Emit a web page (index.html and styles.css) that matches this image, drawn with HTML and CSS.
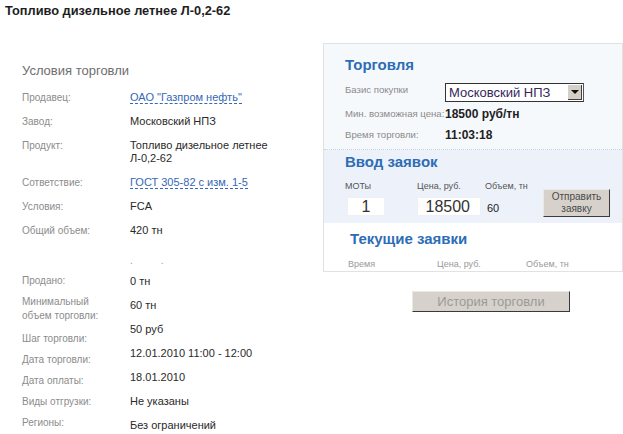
FILE: index.html
```html
<!DOCTYPE html>
<html lang="ru">
<head>
    <meta charset="UTF-8">
    <title>Торги</title>
    <link rel="stylesheet" href="styles.css">
</head>
<body>
    <h1 class="title">Топливо дизельное летнее Л-0,2-62</h1>
    <div class="page">
        <div class="terms">
            <h2>Условия торговли</h2>
            <div class="info">
                <span class="label">Продавец:</span>
                <span class="value"><a href="#" class="link">ОАО "Газпром нефть"</a></span>
                <span class="label">Завод:</span>
                <span class="value">Московский НПЗ</span>
                <span class="label">Продукт:</span>
                <span class="value">Топливо дизельное летнее<br>Л-0,2-62</span>
                <span class="label">Сответствие:</span>
                <span class="value"><a href="#" class="link">ГОСТ 305-82 с изм. 1-5</a></span>
                <span class="label">Условия:</span>
                <span class="value">FCA</span>
                <span class="label">Общий объем:</span>
                <span class="value">420 тн</span>
            </div>
            <div class="dots"><span>.</span><span>.</span></div>
            <div class="split">
                <ul class="labels">
                    <li>Продано:</li>
                    <li>Минимальный<br>объем торговли:</li>
                    <li>Шаг торговли:</li>
                    <li>Дата торговли:</li>
                    <li>Дата оплаты:</li>
                    <li>Виды отгрузки:</li>
                    <li>Регионы:</li>
                </ul>
                <ul class="values">
                    <li>0 тн</li>
                    <li>60 тн</li>
                    <li>50 руб</li>
                    <li>12.01.2010 11:00 - 12:00</li>
                    <li>18.01.2010</li>
                    <li>Не указаны</li>
                    <li>Без ограничений</li>
                </ul>
            </div>
        </div>
        <div class="side">
            <div class="panel">
                <div class="trade">
                    <h3>Торговля</h3>
                    <div class="trade-row first">
                        <span class="tlabel">Базис покупки</span>
                        <div class="select">Московский НПЗ<span class="arrow"></span></div>
                    </div>
                    <div class="trade-row">
                        <span class="tlabel">Мин. возможная цена:</span>
                        <b>18500 руб/тн</b>
                    </div>
                    <div class="trade-row">
                        <span class="tlabel">Время торговли:</span>
                        <b>11:03:18</b>
                    </div>
                </div>
                <div class="order">
                    <h3>Ввод заявок</h3>
                    <div class="fields">
                        <div class="field lots">
                            <span class="flabel">МОТы</span>
                            <div class="box center">1</div>
                        </div>
                        <div class="field price">
                            <span class="flabel">Цена, руб.</span>
                            <div class="box right">18500</div>
                        </div>
                        <div class="field volume">
                            <span class="flabel">Объем, тн</span>
                            <span class="vol">60</span>
                        </div>
                        <button class="send">Отправить<br>заявку</button>
                    </div>
                </div>
                <div class="current">
                    <h3>Текущие заявки</h3>
                    <div class="heads">
                        <span>Время</span>
                        <span>Цена, руб.</span>
                        <span>Объем, тн</span>
                    </div>
                </div>
            </div>
            <button class="history">История торговли</button>
        </div>
    </div>
</body>
</html>
```

FILE: styles.css
```css
*{
    margin: 0;
    padding: 0;
    box-sizing: border-box;
    font-family: "Liberation Sans", Arial, sans-serif;
}
body{
    width: 623px;
    background: #fff;
    color: #2a2a2a;
    padding: 4px 0 0 5px;
}
.title{
    font-size: 12.8px;
    line-height: 14px;
    font-weight: bold;
    color: #1e1e1e;
}
.page{
    display: flex;
    margin-left: -5px;
}

/* left column */
.terms{
    width: 323px;
    padding: 45px 0 0 22px;
}
.terms h2{
    font-size: 13px;
    line-height: 16px;
    font-weight: normal;
    color: #6e6e6e;
    margin-bottom: 12px;
}
.info{
    display: grid;
    grid-template-columns: 108px 1fr;
    row-gap: 11px;
    font-size: 11px;
    line-height: 13px;
}
.label,
.labels li{
    font-size: 10px;
    color: #8c8c8c;
}
.value,
.values li{
    font-size: 11px;
    color: #2a2a2a;
}
.link{
    color: #3567b5;
    text-decoration: none;
    border-bottom: 1px dashed #3567b5;
}
.dots{
    margin: 17px 0 0 108px;
    height: 13px;
    font-size: 10px;
    line-height: 13px;
    color: #999;
}
.dots span{
    margin-right: 28px;
}
.split{
    display: flex;
    margin-top: 7px;
}
.labels,
.values{
    list-style: none;
}
.labels{
    width: 108px;
}
.labels li{
    line-height: 14px;
    margin-bottom: 7px;
}
.labels li:nth-child(2){
    margin-bottom: 9px;
}
.values li{
    line-height: 14px;
    margin-bottom: 10px;
}

/* right column */
.side{
    width: 300px;
    padding-top: 25px;
}
.panel{
    border: 1px solid #e2e2e2;
}
.panel h3{
    font-size: 15px;
    line-height: 17px;
    font-weight: bold;
    color: #2d6db5;
}
.trade{
    background: #f6f9fc;
    padding: 12px 0 4px 21px;
    border-bottom: 1px dotted #c8d2de;
}
.trade h3{
    margin-bottom: 10px;
}
.trade-row{
    display: flex;
    align-items: center;
    height: 21px;
}
.trade-row.first{
    align-items: flex-start;
    height: 20px;
}
.trade-row b{
    font-size: 12px;
    color: #1e1e1e;
}
.tlabel{
    min-width: 100px;
    font-size: 9.6px;
    color: #8a8a8a;
    white-space: nowrap;
}
.trade-row.first .tlabel{
    padding-top: 1px;
}
.select{
    position: relative;
    width: 139px;
    height: 19px;
    background: #fff;
    border: 1px solid #333;
    border-right-color: #555;
    font-size: 13px;
    line-height: 17px;
    color: #35275a;
    padding-left: 3px;
}
.arrow{
    position: absolute;
    right: 1px;
    top: 1px;
    width: 14px;
    height: 15px;
    background: #d4d0c8;
    border-right: 1px solid #404040;
    border-bottom: 1px solid #404040;
}
.arrow::after{
    content: "";
    position: absolute;
    left: 3px;
    top: 5px;
    border-left: 4px solid transparent;
    border-right: 4px solid transparent;
    border-top: 4px solid #111;
}
.order{
    background: #edf2fa;
    padding: 3px 0 6px 21px;
}
.fields{
    display: flex;
    align-items: flex-start;
    margin-top: 11px;
}
.field{
    display: flex;
    flex-direction: column;
}
.flabel{
    font-size: 9px;
    line-height: 10px;
    color: #555;
}
.lots{
    width: 72px;
}
.price{
    width: 68px;
}
.volume{
    width: 58px;
}
.box{
    margin-top: 6px;
    height: 19px;
    background: #fff;
    border: 1px solid #eef0f4;
    font-size: 16px;
    line-height: 17px;
    color: #333;
}
.lots .box{
    width: 38px;
    margin-left: 2px;
}
.price .box{
    width: 64px;
}
.box.center{
    text-align: center;
}
.box.right{
    text-align: right;
    padding-right: 10px;
}
.vol{
    margin: 10px 0 0 2px;
    font-size: 11px;
    line-height: 14px;
    color: #222;
}
.send{
    margin-top: 8px;
    width: 67px;
    height: 28px;
    background: #d6d2cb;
    border: 1px solid #ece9e4;
    border-right-color: #3a3a3a;
    border-bottom-color: #3a3a3a;
    font-size: 10px;
    line-height: 12px;
    color: #4a4a4a;
}
.current{
    background: #fff;
    padding: 7px 0 1px 26px;
}
.heads{
    display: flex;
    margin: 11px 0 0 -2px;
    font-size: 9px;
    line-height: 12px;
    color: #999;
}
.heads span:nth-child(1){
    width: 89px;
}
.heads span:nth-child(2){
    width: 89px;
}
.history{
    display: block;
    margin: 19px 0 0 89px;
    width: 158px;
    height: 21px;
    background: #d6d2cb;
    border: 1px solid #ece9e4;
    border-right-color: #3a3a3a;
    border-bottom-color: #3a3a3a;
    font-size: 13px;
    color: #9a9a9a;
}
```
